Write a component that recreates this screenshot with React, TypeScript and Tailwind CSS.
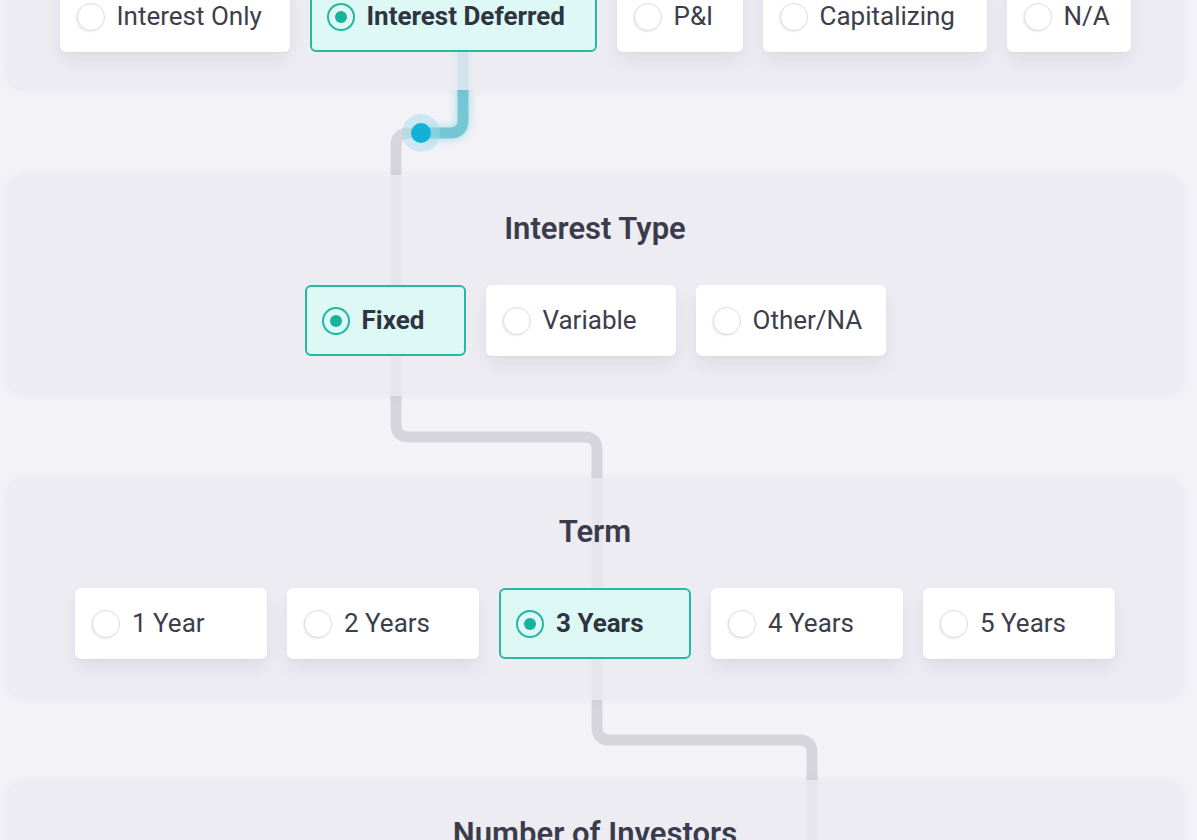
import React from 'react'

type Opt = { label: string; w: string; selected?: boolean }

const row1: Opt[] = [
  { label: 'Interest Only', w: 'w-[230px]' },
  { label: 'Interest Deferred', w: 'w-[287px]', selected: true },
  { label: 'P&I', w: 'w-[126px]' },
  { label: 'Capitalizing', w: 'w-[224px]' },
  { label: 'N/A', w: 'w-[124px]' },
]

const interestType: Opt[] = [
  { label: 'Fixed', w: 'w-[161px]', selected: true },
  { label: 'Variable', w: 'w-[190px]' },
  { label: 'Other/NA', w: 'w-[190px]' },
]

const term: Opt[] = [
  { label: '1 Year', w: 'w-[192px]' },
  { label: '2 Years', w: 'w-[192px]' },
  { label: '3 Years', w: 'w-[192px]', selected: true },
  { label: '4 Years', w: 'w-[192px]' },
  { label: '5 Years', w: 'w-[192px]' },
]

function Radio({ on }: { on?: boolean }) {
  if (on) {
    return (
      <span className="flex h-7 w-7 shrink-0 items-center justify-center rounded-full border-2 border-[#25b6a1]">
        <span className="h-3 w-3 rounded-full bg-[#17b39c]" />
      </span>
    )
  }
  return <span className="h-7 w-7 shrink-0 rounded-full border border-[#dddce2] bg-white shadow-[-1px_1px_2px_rgba(0,0,0,0.08)]" />
}

function Card({ o }: { o: Opt }) {
  return (
    <div
      className={
        o.selected
          ? `${o.w} flex h-[71px] items-center gap-3 rounded-md border-2 border-[#2ab7a2] bg-[#ddf8f5] pl-[15px]`
          : `${o.w} flex h-[71px] items-center gap-3 rounded-md bg-white pl-[17px] shadow-[0_10px_18px_rgba(40,40,70,0.07),0_1px_2px_rgba(0,0,0,0.04)]`
      }
    >
      <Radio on={o.selected} />
      <span className={o.selected ? 'text-[26px] font-bold text-[#2e3440]' : 'text-[26px] text-[#3c3e4b]'}>{o.label}</span>
    </div>
  )
}

function Row({ opts }: { opts: Opt[] }) {
  return (
    <div className="flex justify-center gap-5">
      {opts.map((o) => (
        <Card key={o.label} o={o} />
      ))}
    </div>
  )
}

function Section({ title, opts, className }: { title?: string; opts?: Opt[]; className: string }) {
  return (
    <section className={`relative z-10 ml-[6px] w-[1178px] rounded-2xl bg-[#ebeaf1]/80 shadow-[0_0_12px_rgba(60,60,90,0.04)] ${className}`}>
      {title && <h2 className="text-center text-[31px] leading-9 font-semibold text-[#3a3c4b]">{title}</h2>}
      {opts && <div className={title ? 'mt-[38px]' : ''}><Row opts={opts} /></div>}
    </section>
  )
}

function Connectors() {
  return (
    <svg className="absolute inset-0 z-0" width="1197" height="840" viewBox="0 0 1197 840" fill="none">
      <defs>
        <filter id="glow" x="-50%" y="-50%" width="200%" height="200%">
          <feGaussianBlur stdDeviation="4" />
        </filter>
      </defs>
      <path
        d="M421 133 H409 Q396 133 396 146 V424 Q396 437 409 437 H584 Q597 437 597 450 V727 Q597 740 610 740 H799 Q812 740 812 753 V840"
        stroke="#d6d5dc"
        strokeWidth="11"
      />
      <path d="M463 40 V120 Q463 133 450 133 H421" stroke="#8fd3e0" strokeWidth="14" opacity="0.6" filter="url(#glow)" />
      <path d="M463 40 V120 Q463 133 450 133 H421" stroke="#6cc3d3" strokeWidth="11" opacity="0.9" />
      <circle cx="421" cy="133" r="19" fill="#9fdcee" opacity="0.45" />
      <circle cx="421" cy="133" r="10" fill="#12b2d6" />
    </svg>
  )
}

export default function App() {
  return (
    <div className="relative h-[840px] w-[1197px] overflow-hidden bg-[#f3f2f7] font-['Roboto',sans-serif]">
      <Connectors />
      <div className="relative flex flex-col">
        <Section opts={row1} className="mt-[-40px] pt-[21px] pb-[38px]" />
        <Section title="Interest Type" opts={interestType} className="mt-[85px] pt-9 pb-10" />
        <Section title="Term" opts={term} className="mt-[82px] pt-9 pb-[41px]" />
        <Section title="Number of Investors" className="mt-[80px] h-[200px] pt-9" />
      </div>
    </div>
  )
}
